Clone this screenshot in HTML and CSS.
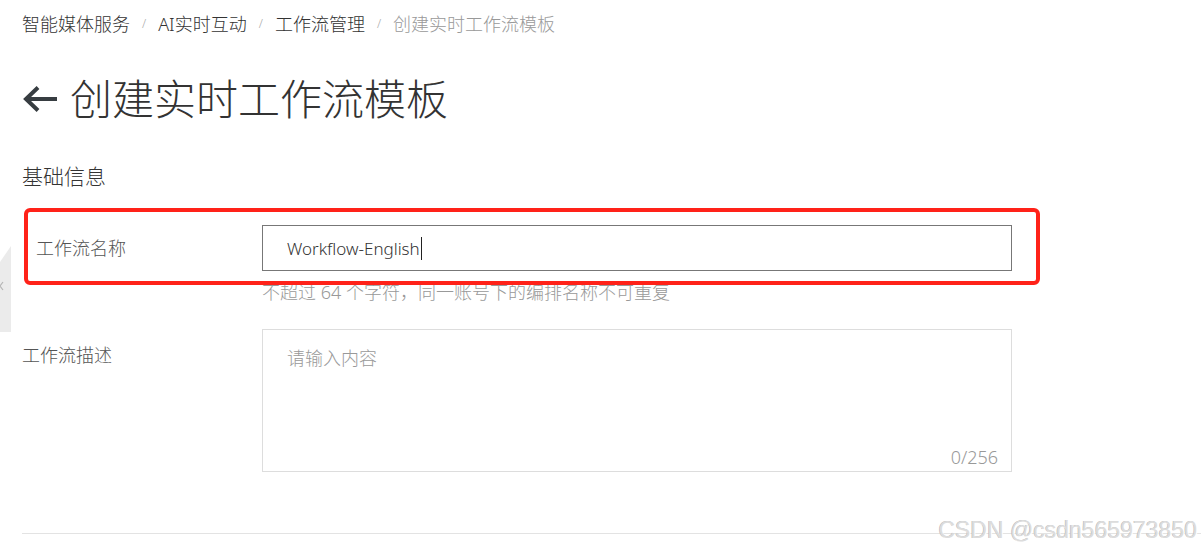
FILE: index.html
```html
<!DOCTYPE html>
<html lang="zh-CN">
<head>
    <meta charset="UTF-8">
    <meta name="viewport" content="width=device-width, initial-scale=1.0">
    <title>创建实时工作流模板</title>
    <link rel="stylesheet" href="styles.css">
</head>
<body>
    <div class="side-tab">
        <svg width="12" height="86" viewBox="0 0 12 86">
            <polygon points="0,16 11,0 11,86 0,86" fill="#ebebeb"/>
            <path d="M3 36 L0 40 L3 44" stroke="#b5b5b5" stroke-width="1.2" fill="none"/>
        </svg>
    </div>

    <div class="page">
        <nav class="breadcrumb">
            <a href="#">智能媒体服务</a>
            <span class="sep">/</span>
            <a href="#">AI实时互动</a>
            <span class="sep">/</span>
            <a href="#">工作流管理</a>
            <span class="sep">/</span>
            <span class="current">创建实时工作流模板</span>
        </nav>

        <h1 class="page-title">
            <svg class="back-icon" width="36" height="28" viewBox="0 0 36 28">
                <path d="M35 14 H4 M16 2.5 L4 14 L16 25.5" stroke="#373d41" stroke-width="4" fill="none"/>
            </svg>
            <span>创建实时工作流模板</span>
        </h1>

        <h3 class="section-title">基础信息</h3>

        <div class="form">
            <div class="form-item highlighted">
                <div class="mark-box"></div>
                <label class="form-label shifted">工作流名称</label>
                <div class="form-control">
                    <div class="input">Workflow-English<span class="caret"></span></div>
                </div>
            </div>
            <div class="help">不超过 64 个字符，同一账号下的编排名称不可重复</div>

            <div class="form-item top">
                <label class="form-label">工作流描述</label>
                <div class="form-control">
                    <div class="textarea">
                        <span class="placeholder">请输入内容</span>
                        <span class="counter">0/256</span>
                    </div>
                </div>
            </div>
        </div>

        <hr class="divider">
    </div>

    <div class="watermark">CSDN @csdn565973850</div>
</body>
</html>
```

FILE: styles.css
```css
body {
    margin: 0;
    font-family: "Noto Sans", "Noto Sans CJK SC", sans-serif;
    font-weight: 300;
    color: #333;
    background-color: #fff;
    overflow: hidden;
}

.page {
    padding: 12px 0 0 22px;
}

.breadcrumb {
    display: flex;
    align-items: center;
    height: 24px;
    font-size: 18px;
    line-height: 24px;
}

.breadcrumb a {
    color: #333;
    text-decoration: none;
}

.breadcrumb .sep {
    color: #aaa;
    font-size: 12px;
    margin: 0 12px;
}

.breadcrumb .current {
    color: #999;
}

.page-title {
    display: flex;
    align-items: center;
    gap: 12px;
    margin: 35px 0 0;
    height: 56px;
    font-size: 42px;
    font-weight: 300;
    line-height: 56px;
    color: #333;
}

.section-title {
    margin: 35px 0 0;
    font-size: 21px;
    font-weight: 300;
    line-height: 28px;
    color: #333;
}

.form {
    margin-top: 35px;
}

.form-item {
    display: flex;
    align-items: center;
    position: relative;
}

.form-item.top {
    align-items: flex-start;
    margin-top: 25px;
}

.form-label {
    width: 240px;
    flex-shrink: 0;
    font-size: 18px;
    line-height: 24px;
    color: #555;
}

.form-item.top .form-label {
    padding-top: 14px;
}

.form-label.shifted {
    width: 226px;
    padding-left: 14px;
}

.form-control {
    width: 750px;
}

.input {
    box-sizing: border-box;
    height: 46px;
    border: 1px solid #777;
    padding: 0 24px;
    display: flex;
    align-items: center;
    font-size: 17px;
    color: #333;
}

.caret {
    display: inline-block;
    width: 1px;
    height: 23px;
    background-color: #222;
    margin-left: 1px;
}

.help {
    margin: 9px 0 0 240px;
    font-size: 18px;
    line-height: 24px;
    color: #999;
}

.textarea {
    box-sizing: border-box;
    height: 143px;
    border: 1px solid #ddd;
    padding: 16px 24px 0;
    position: relative;
    font-size: 18px;
    line-height: 24px;
}

.placeholder {
    color: #999;
}

.counter {
    position: absolute;
    right: 13px;
    bottom: 2px;
    color: #999;
}

.mark-box {
    position: absolute;
    left: 2px;
    top: -17px;
    width: 1016px;
    height: 77px;
    box-sizing: border-box;
    border: 4px solid #ff2219;
    border-radius: 6px;
    pointer-events: none;
}

.divider {
    margin: 61px 0 0;
    border: none;
    border-top: 1px solid #e3e3e3;
}

.side-tab {
    position: absolute;
    left: 0;
    top: 246px;
    line-height: 0;
}

.watermark {
    position: absolute;
    right: 4px;
    top: 513px;
    font-family: "Liberation Sans", Arial, sans-serif;
    font-size: 23px;
    font-weight: 400;
    line-height: 34px;
    color: #dcdcdc;
    text-shadow: 1px 1px 0 #fff, -0.5px -0.5px 0 #b4b4b4;
}
```
